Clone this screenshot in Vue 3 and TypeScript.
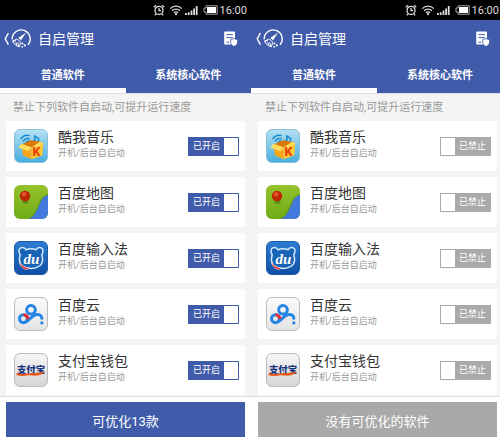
<script setup lang="ts">
import { reactive } from 'vue'

type IconName = 'music' | 'map' | 'input' | 'cloud' | 'pay'

interface AppItem {
  icon: IconName
  name: string
  enabled: boolean
}

interface Panel {
  id: string
  action: string
  optimizable: boolean
  apps: AppItem[]
}

const catalogue: { icon: IconName; name: string }[] = [
  { icon: 'music', name: '酷我音乐' },
  { icon: 'map', name: '百度地图' },
  { icon: 'input', name: '百度输入法' },
  { icon: 'cloud', name: '百度云' },
  { icon: 'pay', name: '支付宝钱包' },
]

const makeApps = (enabled: boolean): AppItem[] =>
  catalogue.map((item) => ({ ...item, enabled }))

const panels = reactive<Panel[]>([
  { id: 'before', action: '可优化13款', optimizable: true, apps: makeApps(true) },
  { id: 'after', action: '没有可优化的软件', optimizable: false, apps: makeApps(false) },
])
</script>

<template>
  <div class="page">
    <div class="panels">
      <section v-for="panel in panels" :key="panel.id" class="panel">
        <div class="status">
          <svg class="alarm" viewBox="0 0 12 12" width="12" height="12">
            <circle cx="6" cy="6.4" r="4" />
            <path d="M6 4v2.6h2M.8 3.2 3 1.2M11.2 3.2 9 1.2M3 10l-1.2 1.2M9 10l1.2 1.2" />
          </svg>
          <svg class="wifi" viewBox="0 0 14 12" width="14" height="12">
            <path d="M1.2 4.6a8.2 8.2 0 0 1 11.6 0M3.1 6.7a5.5 5.5 0 0 1 7.8 0M5 8.7a2.8 2.8 0 0 1 4 0" />
            <circle cx="7" cy="10.2" r="1.1" />
          </svg>
          <svg class="signal" viewBox="0 0 13 12" width="13" height="12">
            <path d="M0 9h1.8v2H0zM2.8 8.2h1.8V11H2.8zM5.6 6.6h1.8V11H5.6zM8.2 4.6H10V11H8.2zM10.8 2h1.8v9h-1.8z" />
          </svg>
          <svg class="battery" viewBox="0 0 15 10" width="15" height="10">
            <path class="shell" d="M3 .8h11.2v8.4H3V7H1V3h2z" />
            <path class="charge" d="M4 2h9v6H4z" />
          </svg>
          <time class="clock">16:00</time>
        </div>

        <header class="bar">
          <button class="back" type="button" aria-label="返回">
            <svg viewBox="0 0 28 22" width="28" height="22">
              <path class="chevron" d="M4.4 5 1.2 10.8l3.2 5.8" />
              <path class="ring" d="M8.2 11.4a9 9 0 1 1 15.8 5.4" />
              <path class="ring" d="M8.4 13.3l3.4-1.4" />
              <path class="fill" d="M22.2 4.6 17 12.2l-2.7-2.2z" />
              <path class="brush" d="M12.4 11.2c1.8.2 3.5 1.6 4.2 3.4l-1.2 4.2c-2.8-.4-5.2-2.4-6.6-5.2zM11.6 13.8l1.4 3.6M13.8 14.2l.8 4" />
              <circle class="fill" cx="18.4" cy="15.4" r="1" />
              <circle class="fill" cx="20.8" cy="17.4" r="1.1" />
              <circle class="fill" cx="18.2" cy="18.8" r=".9" />
            </svg>
          </button>
          <h1 class="title">自启管理</h1>
          <button class="report" type="button" aria-label="记录">
            <svg viewBox="0 0 14 16" width="14" height="16">
              <path class="sheet" d="M1 .6h9.2q.8 0 .8.8v12.2H1q-.8 0-.8-.8V1.4Q.2.6 1 .6z" />
              <path class="rule" d="M2.4 3.7h6.4M2.4 6.6h6.4M2.4 11.2h2.8" />
              <path class="shield" d="M10.1 7.4c1 .8 2 1 3.4 1.1v2.8c0 2-1.4 3.2-3.4 4.2-2-1-3.4-2.2-3.4-4.2V8.5c1.4-.1 2.4-.3 3.4-1.1z" />
            </svg>
          </button>
        </header>

        <nav class="tabs">
          <button class="tab active" type="button">普通软件</button>
          <button class="tab" type="button">系统核心软件</button>
        </nav>

        <main class="content">
          <p class="hint">禁止下列软件自启动,可提升运行速度</p>
          <ul class="list">
            <li v-for="app in panel.apps" :key="app.icon" class="card">
              <span class="icon" :class="app.icon">
                <svg v-if="app.icon === 'music'" viewBox="0 0 34 34">
                  <path class="wave" d="M6 9.5q4-5.500 9.500-3.500M8.500 12q3-4 7-2.500M11.500 13.500q1.500-2 4-1.500" />
                  <path class="note" d="M21 13V6.500l4 2.500v3.500" />
                  <circle class="note-dot" cx="20" cy="12.500" r="2" />
                  <path class="box-back" d="M7 15.500l10-4.500 12.500 2-11 6z" />
                  <path class="box-side" d="M7 15.500l10.500 3.500v12L8.500 27z" />
                  <path class="box-front" d="M17.500 19l12.500-5-1 13-11.500 4z" />
                  <path class="flap" d="M7 14.500 3.500 18.500l10.500 4 4-4z" />
                  <path class="flap" d="m17.500 18.500 9-6 4 1.500-9 5.500z" />
                  <text x="18.500" y="28" class="letter">K</text>
                </svg>
                <svg v-else-if="app.icon === 'map'" viewBox="0 0 34 34">
                  <path class="river" d="M34 9.500C26 12 26.500 18 23 24c-2.500 5-4 8-9 10h20z" />
                  <path class="bank" d="M34 9.500C26 12 26.500 18 23 24c-2.500 5-4 8-9 10" />
                  <ellipse class="pin-shadow" cx="11.500" cy="16.500" rx="3" ry="2.500" />
                  <circle class="pin" cx="11" cy="11" r="5.200" />
                  <circle class="pin-light" cx="10.200" cy="9.300" r="2.300" />
                </svg>
                <svg v-else-if="app.icon === 'input'" viewBox="0 0 34 34">
                  <path class="bear" d="M5.500 13.500C2.800 9.500 4.500 5.500 8 5.800c2 .1 3 1.200 3.600 2.400q5.400-1.800 10.800 0C23 7 24 5.900 26 5.800c3.500-.3 5.200 3.700 2.500 7.700 1.500 5.500 1.200 9.500-2.500 12-5 3.500-13 3.500-18 0-3.700-2.500-4-6.500-2.500-12z" />
                  <path class="scarf" d="M5 21q2.500 6 10 6.500l-2.500 2q-7-1.500-7.500-8.500z" />
                  <text x="9" y="23" class="du">du</text>
                </svg>
                <svg v-else-if="app.icon === 'cloud'" viewBox="0 0 34 34">
                  <circle class="loop" cx="17" cy="12.500" r="4.600" />
                  <circle class="loop" cx="9" cy="22" r="4.200" />
                  <path class="loop" d="M12 25c4-1.500 6-7 11-7.500 3.500-.2 5.500 1.500 5.500 4" />
                  <path class="red" d="M9 17.800q4 .2 5 4.700" />
                  <circle class="dot" cx="28.500" cy="26.500" r="1.700" />
                </svg>
                <svg v-else viewBox="0 0 34 34">
                  <text x="2" y="20" class="brand">支付宝</text>
                  <path class="swoosh" d="M4 18.500c-3 3 3 3.300 9 2.300 8-1 14 .2 19-3-2 5-9 6-17 4.700-9 1.500-18 1.300-11-4z" />
                </svg>
              </span>
              <div class="info">
                <h2 class="name">{{ app.name }}</h2>
                <p class="mode">开机/后台自启动</p>
              </div>
              <label class="switch" :class="{ on: app.enabled }">
                <input v-model="app.enabled" type="checkbox" :aria-label="app.name" />
                <span class="state">{{ app.enabled ? '已开启' : '已禁止' }}</span>
              </label>
            </li>
          </ul>
        </main>

        <footer class="footer">
          <button class="action" :class="{ idle: !panel.optimizable }" type="button">{{ panel.action }}</button>
        </footer>
      </section>
    </div>
  </div>
</template>

<style>
body {
  background: #fff;
}
</style>

<style scoped>
.page {
  overflow: hidden;
  font-family: Roboto, "Noto Sans CJK SC", sans-serif;
}
.panels {
  display: grid;
  grid-template-columns: calc(50% + 1px) calc(50% + 2px);
  min-height: 100vh;
}
.panel {
  display: flex;
  flex-direction: column;
  min-width: 0;
  background: #f4f4f4;
}
button {
  margin: 0;
  padding: 0;
  border: 0;
  background: none;
  color: inherit;
  font: inherit;
  cursor: pointer;
}
h1,
h2,
p,
ul {
  margin: 0;
  padding: 0;
  font-weight: 400;
}
svg {
  display: block;
}

.status {
  display: flex;
  align-items: center;
  justify-content: flex-end;
  height: 20px;
  padding-right: 4px;
  background: #000;
  color: #ddd;
}
.alarm,
.wifi {
  fill: none;
  stroke: currentColor;
  stroke-width: 1.3;
}
.wifi {
  margin: 0 2px 0 4px;
}
.wifi circle {
  fill: currentColor;
  stroke: none;
}
.signal {
  fill: currentColor;
}
.battery {
  margin: 0 2px 0 5px;
}
.shell {
  fill: none;
  stroke: #aaa;
}
.charge {
  fill: #fff;
}
.clock {
  padding-top: 2px;
  font-size: 11px;
  line-height: 18px;
}

.bar {
  display: flex;
  align-items: center;
  height: 37px;
  padding: 0 13px 0 4px;
  background: #3f5ba9;
  color: #fff;
}
.chevron,
.ring,
.brush {
  fill: none;
  stroke: #fff;
  stroke-width: 1.4;
}
.brush {
  stroke-width: 1;
}
.fill {
  fill: #fff;
}
.title {
  flex: 1;
  padding-left: 6px;
  font-size: 14px;
  line-height: 20px;
}
.sheet,
.shield {
  fill: #fff;
}
.rule {
  fill: none;
  stroke: #3f5ba9;
}
.shield {
  stroke: #3f5ba9;
  stroke-width: 0.8;
}

.tabs {
  display: flex;
  border-bottom: 1px solid #dcdee6;
  background: #3f5ba9;
  color: #fff;
}
.tab {
  flex: 1;
  height: 36px;
  padding-top: 6px;
  border-bottom: 5px solid transparent;
  font-size: 11px;
  font-weight: 700;
  line-height: 16px;
}
.active {
  border-bottom-color: #fff;
}

.content {
  flex: 1;
  padding: 0 6px;
}
.hint {
  padding: 6px 6px 5px 7px;
  color: #999;
  font-size: 11px;
  line-height: 16px;
}
.list {
  display: grid;
  gap: 6px;
  list-style: none;
}
.card {
  display: flex;
  align-items: center;
  height: 50px;
  padding: 0 6px 0 8px;
  background: #fff;
}
.icon {
  box-sizing: border-box;
  width: 34px;
  height: 34px;
  border-radius: 6px;
  overflow: hidden;
}
.icon svg {
  width: 100%;
  height: 100%;
}
.info {
  flex: 1;
  padding: 0 0 4px 10px;
}
.name {
  color: #333;
  font-size: 14px;
  line-height: 18px;
}
.mode {
  color: #999;
  font-size: 9px;
  line-height: 14px;
}

.switch {
  display: flex;
  box-sizing: border-box;
  width: 51px;
  height: 19px;
  border: 1px solid #aaa;
  background: #aaa;
  color: #fff;
  cursor: pointer;
}
.switch input {
  appearance: none;
  width: 14px;
  margin: 0;
  background: #fff;
}
.state {
  flex: 1;
  font-size: 9px;
  line-height: 17px;
  text-align: center;
}
.switch.on {
  flex-direction: row-reverse;
  border-color: #3f5ba9;
  background: #3f5ba9;
}

.footer {
  padding: 5px 6px 0;
  border-top: 1px solid #ddd;
  background: #fff;
}
.action {
  display: block;
  width: 100%;
  height: 35px;
  padding-top: 2px;
  background: #3f5ba9;
  color: #fff;
  font-size: 13px;
}
.idle {
  background: #a9a9a9;
}
.panel:last-child .bar {
  padding-left: 5px;
}
.panel:last-child .content,
.panel:last-child .footer {
  padding-left: 7px;
}

.music {
  border: 1px solid #8cbfd6;
  background: linear-gradient(#b4e0f3, #48aee0);
}
.wave,
.note {
  fill: none;
  stroke: #168ad0;
  stroke-width: 1.6;
}
.note-dot {
  fill: #168ad0;
}
.box-back {
  fill: #d97a08;
}
.box-side {
  fill: #f9a51a;
}
.box-front {
  fill: #ffc832;
}
.flap {
  fill: #ffdc5c;
}
.letter {
  fill: #e8400c;
  font: 900 13px Roboto, sans-serif;
}
.map {
  background: linear-gradient(#96c12b, #6fac16);
}
.river {
  fill: #4379dc;
}
.bank {
  fill: none;
  stroke: #5d961a;
}
.pin-shadow {
  fill: #5c9016;
}
.pin {
  fill: #bd2505;
}
.pin-light {
  fill: #e2552a;
}
.input {
  border: 1px solid #1d5aa8;
  background: linear-gradient(#2c7cd2, #0f4fa5);
}
.bear {
  fill: #1763b5;
  stroke: #d5e8fb;
  stroke-width: 1.6;
}
.scarf {
  fill: #e52b22;
  stroke: #fff;
  stroke-width: 0.5;
}
.du {
  fill: #fff;
  font: italic 700 16px "Liberation Serif", serif;
}
.cloud,
.pay {
  border: 1px solid #bbb;
  background: linear-gradient(#fafafa, #e4e4e6);
}
.pay {
  background: linear-gradient(#f5f5f5, #d6d6d6);
}
.loop {
  fill: none;
  stroke: #2585e4;
  stroke-width: 3.2;
  stroke-linecap: round;
}
.red {
  fill: none;
  stroke: #e62e35;
  stroke-width: 3.2;
}
.dot {
  fill: #2585e4;
}
.brand {
  fill: #16347f;
  font: 900 10px "Noto Sans CJK SC", sans-serif;
}
.swoosh {
  fill: #f05a1a;
}
</style>
